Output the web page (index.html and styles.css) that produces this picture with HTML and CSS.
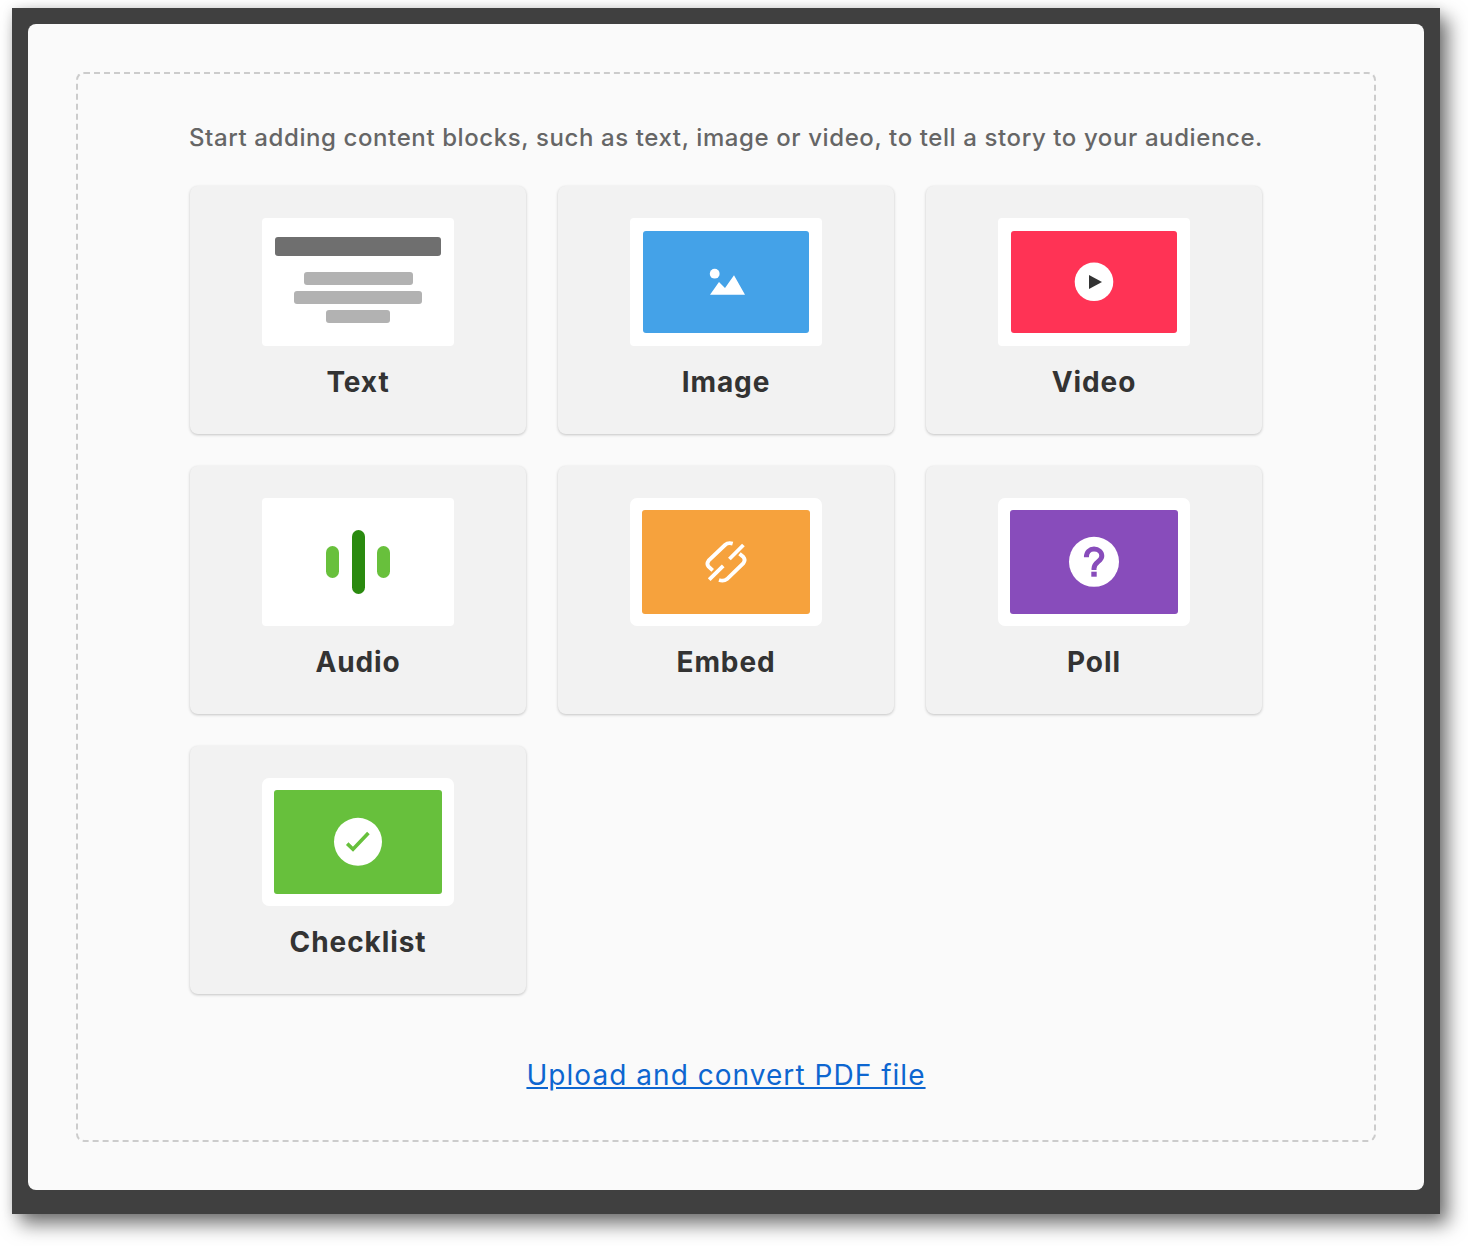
FILE: index.html
```html
<!DOCTYPE html>
<html lang="en">
<head>
<meta charset="utf-8">
<title>Content blocks</title>
<link rel="stylesheet" href="styles.css">
</head>
<body>
<div class="frame">
  <main class="sheet">
    <section class="dropzone">
      <p class="intro">Start adding content blocks, such as text, image or video, to tell a story to your audience.</p>
      <div class="grid">
        <div class="card">
          <div class="thumb thumb-text">
            <span class="bar bar-head"></span>
            <span class="bar bar-a"></span>
            <span class="bar bar-b"></span>
            <span class="bar bar-c"></span>
          </div>
          <div class="label">Text</div>
        </div>
        <div class="card">
          <div class="thumb">
            <svg class="panel panel-small panel-blue" viewBox="643 231 166 102">
              <circle cx="714.7" cy="273.7" r="4.9" fill="#fff"/>
              <polygon points="710,294.8 719,282 725,288 734,275.3 745,294.8" fill="#fff"/>
            </svg>
          </div>
          <div class="label">Image</div>
        </div>
        <div class="card">
          <div class="thumb">
            <svg class="panel panel-small panel-red" viewBox="1011 231 166 102">
              <circle cx="1094" cy="281.8" r="19.3" fill="#fff"/>
              <polygon points="1089,275 1102,282 1089,289" fill="#333"/>
            </svg>
          </div>
          <div class="label">Video</div>
        </div>
        <div class="card">
          <div class="thumb thumb-audio">
            <span class="wave wave-side"></span>
            <span class="wave wave-mid"></span>
            <span class="wave wave-side"></span>
          </div>
          <div class="label">Audio</div>
        </div>
        <div class="card">
          <div class="thumb thumb-round">
            <svg class="panel panel-orange" viewBox="642 510 168 104">
              <g fill="none" stroke="#fff" stroke-width="3.8">
                <path d="M732.7 543.6Q728 542.2 725 545L708.6 560.6Q706.2 564 708.6 566.6L712.7 570.4"/>
                <path d="M743.4 545L729.4 559"/>
                <path d="M723.2 565.8L709.2 579.6"/>
                <path d="M719 580Q723.8 581.6 727 579L743.4 563.2Q745.8 559.6 743.4 557L739.5 553.8"/>
              </g>
            </svg>
          </div>
          <div class="label">Embed</div>
        </div>
        <div class="card">
          <div class="thumb thumb-round">
            <svg class="panel panel-purple" viewBox="1010 510 168 104">
              <circle cx="1094" cy="561.8" r="25" fill="#fff"/>
              <path d="M1086.4 557.2C1086.4 552 1089.8 549 1094 549C1098.4 549 1101.8 552 1101.8 556C1101.8 561.6 1094 561.8 1094 568.4V570" fill="none" stroke="#884cbb" stroke-width="5"/>
              <rect x="1091.3" y="571.7" width="5.4" height="5" fill="#884cbb"/>
            </svg>
          </div>
          <div class="label">Poll</div>
        </div>
        <div class="card">
          <div class="thumb thumb-round">
            <svg class="panel panel-green" viewBox="274 790 168 104">
              <circle cx="358" cy="841.8" r="24" fill="#fff"/>
              <path d="M347.2 843.6L353 849.2L368.4 833" fill="none" stroke="#67c03c" stroke-width="3.6"/>
            </svg>
          </div>
          <div class="label">Checklist</div>
        </div>
      </div>
      <a class="upload" href="#">Upload and convert PDF file</a>
    </section>
  </main>
</div>
</body>
</html>
```
FILE: styles.css
```css
* { box-sizing: border-box; }

html, body {
  margin: 0;
  height: 1246px;
  overflow: hidden;
  background: #fff;
}

body {
  padding: 8px 28px 32px 12px;
  font-family: Inter, "Liberation Sans", sans-serif;
}

.frame {
  height: 1206px;
  padding: 16px 16px 24px;
  background: #404040;
  box-shadow: 8px 10px 18px rgba(0, 0, 0, 0.55), 0 0 10px rgba(0, 0, 0, 0.1);
}

.sheet {
  height: 1166px;
  padding: 48px;
  background: #fafafa;
  border-radius: 8px;
}

.dropzone {
  height: 1070px;
  padding-top: 48px;
  display: flex;
  flex-direction: column;
  align-items: center;
  border: 2px dashed #ccc;
  border-radius: 8px;
}

.intro {
  margin: 0 0 32px;
  font-size: 24px;
  line-height: 32px;
  font-weight: 500;
  letter-spacing: 0.6px;
  color: #666;
  white-space: nowrap;
}

.grid {
  display: grid;
  grid-template-columns: repeat(3, 336px);
  grid-auto-rows: 248px;
  gap: 32px;
}

.card {
  display: flex;
  flex-direction: column;
  align-items: center;
  padding-top: 32px;
  background: #f2f2f2;
  border-radius: 8px;
  box-shadow: 0 1px 3px rgba(0, 0, 0, 0.22);
}

.thumb {
  width: 192px;
  height: 128px;
  display: flex;
  align-items: center;
  justify-content: center;
  background: #fff;
  border-radius: 4px;
}

.thumb-round { border-radius: 7px; }

.panel {
  display: block;
  width: 168px;
  height: 104px;
  border-radius: 3px;
}

.panel-small { width: 166px; height: 102px; }
.panel-blue { background: #44a2e8; }
.panel-red { background: #ff3355; }
.panel-orange { background: #f6a23d; }
.panel-purple { background: #884cbb; }
.panel-green { background: #67c03c; }

.thumb-text {
  flex-direction: column;
  justify-content: flex-start;
  padding-top: 19px;
}

.bar {
  display: block;
  height: 13px;
  margin-bottom: 6px;
  background: #b2b2b2;
  border-radius: 3px;
}

.bar-head { width: 166px; height: 19px; margin-bottom: 16px; background: #6f6f6f; }
.bar-a { width: 109px; }
.bar-b { width: 128px; }
.bar-c { width: 64px; }

.thumb-audio { gap: 12.5px; }

.wave {
  display: block;
  width: 13px;
  border-radius: 7px;
}

.wave-side { height: 32px; background: #68c03c; }
.wave-mid { height: 64px; background: #2a8a0f; }

.label {
  margin-top: 20px;
  font-size: 28px;
  line-height: 32px;
  font-weight: 700;
  letter-spacing: 0.9px;
  color: #333;
}

.upload {
  margin-top: 65px;
  font-size: 28px;
  line-height: 32px;
  letter-spacing: 1.04px;
  color: #0d66d0;
}
```
